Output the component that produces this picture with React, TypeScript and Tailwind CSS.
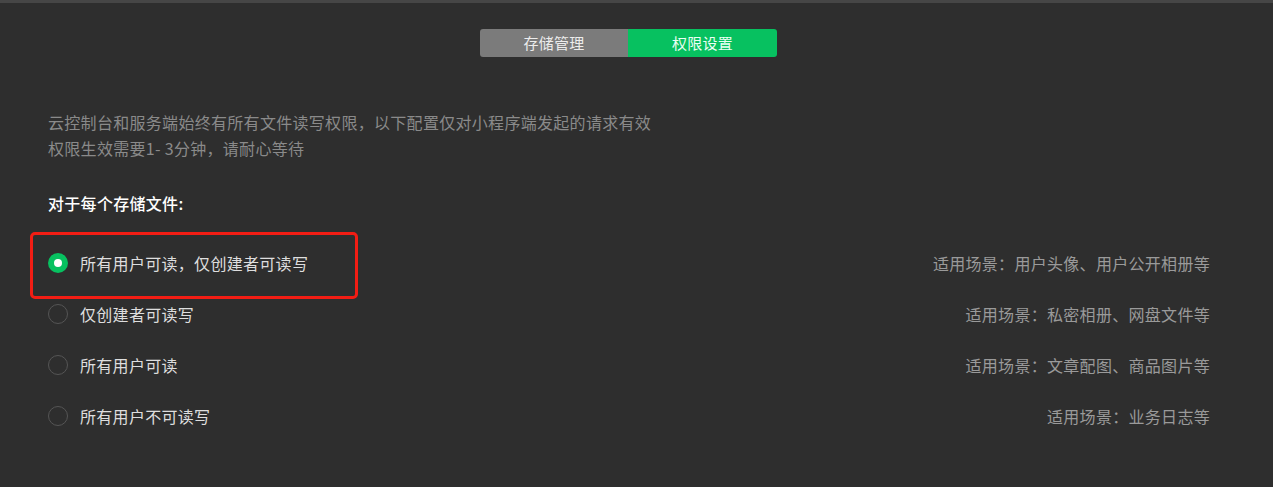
const font = { fontFamily: '"Noto Sans CJK SC", "Noto Sans", sans-serif' };

interface OptionProps {
  id: number;
  label: string;
  scene: string;
}

const options: OptionProps[] = [
  { id: 1, label: "所有用户可读，仅创建者可读写", scene: "适用场景：用户头像、用户公开相册等" },
  { id: 2, label: "仅创建者可读写", scene: "适用场景：私密相册、网盘文件等" },
  { id: 3, label: "所有用户可读", scene: "适用场景：文章配图、商品图片等" },
  { id: 4, label: "所有用户不可读写", scene: "适用场景：业务日志等" },
];

const Radio = ({ checked }: { checked: boolean }) =>
  checked ? (
    <span className="flex h-5 w-5 items-center justify-center rounded-full bg-[#07c160]">
      <span className="h-2 w-2 rounded-full bg-white" />
    </span>
  ) : (
    <span className="h-5 w-5 rounded-full border border-[#555555]" />
  );

export default function App() {
  const selected = 1;
  return (
    <div className="relative h-[487px] w-full overflow-hidden bg-[#2e2e2e] tracking-[0.3px]" style={font}>
      <div className="h-[3px] bg-[#464646]" />
      <div className="flex justify-center pt-[26px] pr-4">
        <div className="flex h-7 overflow-hidden rounded-[3px] text-[15px]">
          <button className="w-[148px] bg-[#7b7b7b] text-[#ececec]">存储管理</button>
          <button className="w-[149px] bg-[#07c160] text-[#eafff3]">权限设置</button>
        </div>
      </div>

      <div className="pl-12 pr-[63px]">
        <div className="mt-[52px] text-base leading-[26px] text-[#8a8a8a]">
          <p>云控制台和服务端始终有所有文件读写权限，以下配置仅对小程序端发起的请求有效</p>
          <p>权限生效需要1- 3分钟，请耐心等待</p>
        </div>

        <h3 className="mt-[29px] text-base font-medium leading-[26px] text-white">对于每个存储文件:</h3>

        <div className="mt-[21px] flex flex-col">
          {options.map((o) => (
            <div key={o.id} className="flex h-[51px] items-center justify-between">
              <div className="flex items-center gap-3">
                <Radio checked={o.id === selected} />
                <span className="text-base text-[#dedede]">{o.label}</span>
              </div>
              <span className="text-base text-[#9a9a9a]">{o.scene}</span>
            </div>
          ))}
        </div>
      </div>

      <div className="absolute left-[30px] top-[232px] h-[67px] w-[328px] rounded-[5px] border-[3px] border-[#f21d14]" />
    </div>
  );
}
